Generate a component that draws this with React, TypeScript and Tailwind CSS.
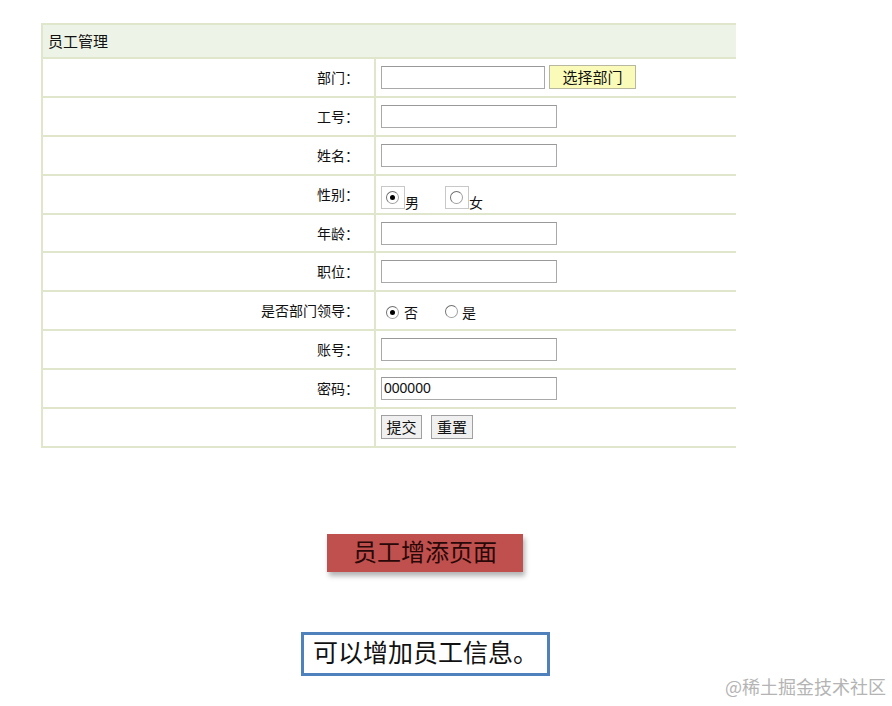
import type React from "react"

const cjk = { fontFamily: '"Noto Sans CJK SC", "Liberation Sans", sans-serif' }
const serif = { fontFamily: '"Liberation Serif", "Noto Sans CJK SC", serif' }

function Radio({ checked }: { checked?: boolean }) {
  return (
    <span className="relative inline-flex h-[13px] w-[13px] items-center justify-center rounded-full border border-[#a0a0a0] border-l-[#707070] border-t-[#707070] bg-white">
      {checked && <span className="h-[5px] w-[5px] rounded-full bg-black" />}
    </span>
  )
}

function TextInput({ w = "w-[176px]", value }: { w?: string; value?: string }) {
  return (
    <div
      className={`${w} flex h-[23px] items-center border border-[#a9a9a9] border-t-[#999] bg-white px-[2px] text-[14px] text-[#111]`}
      style={{ fontFamily: '"Liberation Sans", sans-serif' }}
    >
      {value}
    </div>
  )
}

function Row({ label, children }: { label: string; children: React.ReactNode }) {
  return (
    <div className="flex h-[38.9px] border-b-2 border-[#dfe6cc]">
      <div className="flex w-[333px] items-center justify-end border-r-2 border-[#dfe6cc] pr-[15px] text-[14px] text-[#111]">
        {label}
      </div>
      <div className="flex flex-1 items-center pl-[5px]">{children}</div>
    </div>
  )
}

export default function App() {
  return (
    <div className="relative h-[706px] w-[892px] overflow-hidden bg-white" style={cjk}>
      <div className="ml-[41px] mt-[23px] w-[695px] border-l-2 border-t-2 border-[#dfe6cc]">
        <div className="flex h-[34px] items-center border-b-2 border-[#dfe6cc] bg-[#eef3e7] pl-[5px] text-[15px] text-[#111]">
          员工管理
        </div>
        <Row label="部门：">
          <TextInput w="w-[164px]" />
          <div className="ml-[4px] flex h-[24px] w-[87px] items-center justify-center border border-[#b8b8a0] bg-[#fbfbb9] text-[15px] text-[#111]">
            选择部门
          </div>
        </Row>
        <Row label="工号：">
          <TextInput />
        </Row>
        <Row label="姓名：">
          <TextInput />
        </Row>
        <Row label="性别：">
          <div className="flex items-end pt-[6px]">
            <span className="flex h-[23px] w-[24px] items-start justify-start border border-[#c8c8c8] pl-[4px] pt-[4px]">
              <Radio checked />
            </span>
            <span className="text-[14px] leading-none text-[#111]">男</span>
            <span className="ml-[26px] flex h-[23px] w-[24px] items-start justify-start border border-[#c8c8c8] pl-[4px] pt-[4px]">
              <Radio />
            </span>
            <span className="text-[14px] leading-none text-[#111]">女</span>
          </div>
        </Row>
        <Row label="年龄：">
          <TextInput />
        </Row>
        <Row label="职位：">
          <TextInput />
        </Row>
        <Row label="是否部门领导：">
          <div className="flex items-center pl-[5px] pt-[4px] text-[14px] text-[#111]">
            <Radio checked />
            <span className="ml-[5px]">否</span>
            <span className="ml-[27px]">
              <Radio />
            </span>
            <span className="ml-[4px]">是</span>
          </div>
        </Row>
        <Row label="账号：">
          <TextInput />
        </Row>
        <Row label="密码：">
          <TextInput value="000000" />
        </Row>
        <Row label="">
          <div className="flex gap-[9px] text-[15px] text-[#111]">
            <span className="flex h-[24px] w-[41px] items-center justify-center border border-[#a0a0a0] bg-[#f0f0f0]">提交</span>
            <span className="flex h-[24px] w-[42px] items-center justify-center border border-[#a0a0a0] bg-[#f0f0f0]">重置</span>
          </div>
        </Row>
      </div>

      <div
        className="ml-[327px] mt-[86px] flex h-[38px] w-[196px] items-center justify-center bg-[#c0504d] text-[24px] text-[#2a0808] shadow-[2px_4px_5px_rgba(0,0,0,0.3)]"
        style={serif}
      >
        员工增添页面
      </div>

      <div className="ml-[301px] mt-[60px] flex h-[44px] w-[249px] items-center border-[3px] border-[#4f81bd] pl-[9px] text-[25px] text-[#111]" style={serif}>
        可以增加员工信息。
      </div>

      <div className="absolute bottom-[6px] right-[6px] text-[18px] text-[#b4b4b4]">@稀土掘金技术社区</div>
    </div>
  )
}
